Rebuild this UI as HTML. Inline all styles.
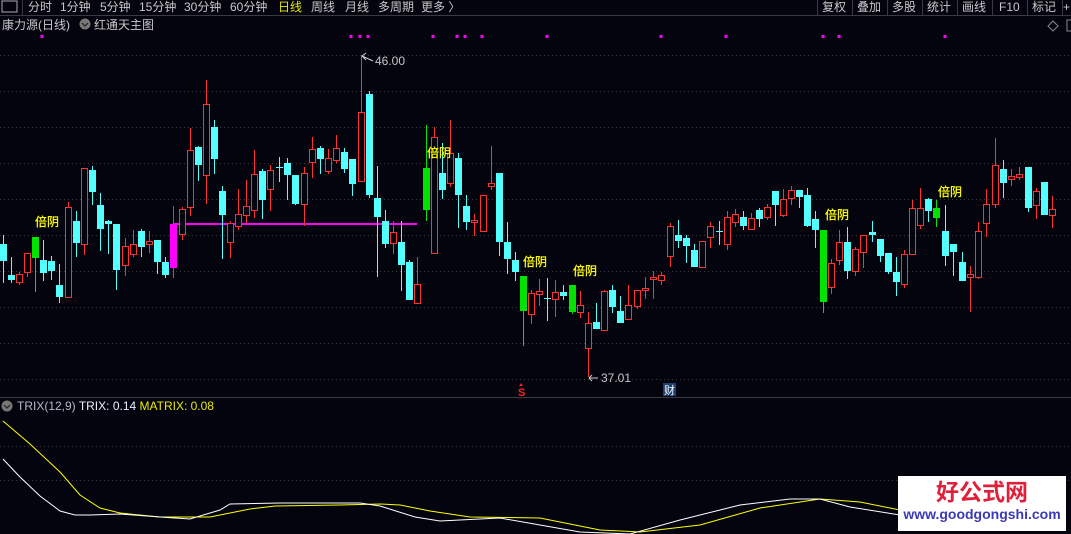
<!DOCTYPE html>
<html><head><meta charset="utf-8">
<style>
html,body{margin:0;padding:0;background:#04040e;width:1071px;height:534px;overflow:hidden;font-family:"Liberation Sans","Noto Sans CJK SC",sans-serif;}
svg{display:block}
text{font-family:"Liberation Sans","Noto Sans CJK SC",sans-serif;}
</style></head><body>
<svg id="s" width="1071" height="534" viewBox="0 0 1071 534" xmlns="http://www.w3.org/2000/svg">
<rect width="1071" height="534" fill="#04040e"/>
<line x1="0" y1="15.5" x2="1071" y2="15.5" stroke="#3a3a40"/>
<line x1="22.5" y1="0" x2="22.5" y2="15" stroke="#3a3a40"/>
<rect x="2" y="1" width="15" height="11" fill="none" stroke="#aaa" stroke-width="1"/>
<g font-size="12" fill="#c8c8c8">
<text x="28" y="11">分时</text><text x="60" y="11">1分钟</text><text x="100" y="11">5分钟</text>
<text x="139" y="11">15分钟</text><text x="184" y="11">30分钟</text><text x="230" y="11">60分钟</text>
<text x="278" y="11" fill="#e8e800">日线</text><text x="311" y="11">周线</text><text x="345" y="11">月线</text>
<text x="378" y="11">多周期</text><text x="421" y="11">更多 〉</text>
<text x="822" y="11">复权</text><text x="857" y="11">叠加</text><text x="892" y="11">多股</text>
<text x="927" y="11">统计</text><text x="962" y="11">画线</text><text x="999" y="11">F10</text>
<text x="1032" y="11">标记</text><text x="1063" y="11">+</text>
</g>
<g stroke="#3a3a40"><line x1="817.5" y1="0" x2="817.5" y2="15"/><line x1="852.5" y1="0" x2="852.5" y2="15"/><line x1="887.5" y1="0" x2="887.5" y2="15"/><line x1="922.5" y1="0" x2="922.5" y2="15"/><line x1="957.5" y1="0" x2="957.5" y2="15"/><line x1="992.5" y1="0" x2="992.5" y2="15"/><line x1="1027.5" y1="0" x2="1027.5" y2="15"/><line x1="1062.5" y1="0" x2="1062.5" y2="15"/></g>
<text x="2" y="29" font-size="12" fill="#c8c8c8">康力源(日线)</text>
<circle cx="85" cy="24" r="5.5" fill="#777"/><path d="M82 23 L85 26 L88 23" stroke="#222" fill="none" stroke-width="1.2"/>
<text x="94" y="29" font-size="12" fill="#c8c8c8">红通天主图</text>
<path d="M1053 21 L1058 26 L1053 31 L1048 26 Z" fill="none" stroke="#888"/>
<rect x="1067" y="20" width="6" height="11" fill="none" stroke="#888"/>
<g id="grid"></g>
<g id="dots"></g>
<line x1="173" y1="224" x2="417" y2="224" stroke="#ff00ff" stroke-width="2"/>
<g id="c"></g>
<g font-size="12" fill="#ffff00" stroke="#ffff00" stroke-width="0.3">
<text x="35" y="226">倍阴</text><text x="427" y="157">倍阴</text><text x="523" y="266">倍阴</text>
<text x="573" y="275">倍阴</text><text x="825" y="219">倍阴</text><text x="938" y="196">倍阴</text>
</g>
<path d="M362 56 L366 53 M362 56 L366 60 M362 56 L373 61" stroke="#ccc" fill="none"/>
<text x="375" y="65" font-size="12" fill="#c8c8c8">46.00</text>
<path d="M589 378 L598 378 M589 378 L592 375 M589 378 L592 381" stroke="#ccc" fill="none"/>
<text x="601" y="382" font-size="12" fill="#c8c8c8">37.01</text>
<text x="518" y="396" font-size="11" font-weight="bold" fill="#ff2020">S</text>
<path d="M519 386 L521 383 L523 386 Z" fill="#ff2020"/>
<rect x="663" y="383" width="13" height="13" fill="#1a4070"/>
<text x="664" y="394" font-size="11" fill="#fff">财</text>
<line x1="0" y1="397.5" x2="1071" y2="397.5" stroke="#3a3a40"/>
<circle cx="7" cy="406" r="5.5" fill="#777"/><path d="M4 405 L7 408 L10 405" stroke="#222" fill="none" stroke-width="1.2"/>
<text x="17" y="410" font-size="12" fill="#aab"><tspan fill="#b8b8c8">TRIX(12,9)</tspan> <tspan fill="#e8f0ff">TRIX: 0.14</tspan> <tspan fill="#e8e800">MATRIX: 0.08</tspan></text>
<polyline fill="none" stroke="#ffff00" stroke-width="1" points="3,421 30,444 60,472 80,495 100,508 120,513 160,517 210,517 250,509 275,506 340,505 380,504 400,505 430,511 470,517 540,518 600,530 640,532 700,525 760,508 820,499 860,502 900,510"/>
<polyline fill="none" stroke="#ffffff" stroke-width="1" points="3,459 20,477 40,496 60,511 75,515 90,515 120,514 160,517 190,519 220,510 230,504 280,503 340,503 360,503 380,506 415,517 440,521 500,518 540,525 580,532 630,534 680,520 740,505 790,499 820,499 850,507 900,515"/>
<rect x="898" y="476" width="168" height="55" fill="#fff"/>
<text x="982" y="500" font-size="23" font-weight="bold" fill="#e0203a" text-anchor="middle">好公式网</text>
<text x="982" y="519" font-size="14" font-weight="bold" fill="#3a3ab4" text-anchor="middle">www.goodgongshi.com</text>
</svg>
<script>
var ns="http://www.w3.org/2000/svg";
function el(p,t,a){var e=document.createElementNS(ns,t);for(var k in a)e.setAttribute(k,a[k]);p.appendChild(e);return e;}
var g=document.getElementById("grid");
[55,91,127,163,199,235,271,307,343,379,446,480].forEach(function(y){el(g,"line",{x1:0,x2:1071,y1:y+.5,y2:y+.5,stroke:"#3a3a3a","stroke-dasharray":"1 3"});});
var d=document.getElementById("dots");
[42,351,360,368,433,457,465,482,547,661,726,823,839,945].forEach(function(x){el(d,"rect",{x:x-1.5,y:35,width:3,height:3,fill:"#ff00ff"});});
var C=[
[3,244,261,235,283,"c"],[11,275,280,257,283,"c"],[19,274,282,272,285,"r"],[27,253,272,253,277,"r"],[35,237,258,237,292,"g"],
[43,260,273,240,281,"c"],[51,261,271,256,280,"c"],[59,285,297,264,303,"c"],[68,207,297,202,298,"r"],[76,221,243,211,257,"c"],
[84,168,244,168,255,"r"],[92,170,192,166,205,"c"],[100,205,229,193,251,"c"],[108,221,224,220,254,"c"],[116,224,270,224,290,"c"],
[125,246,265,238,276,"r"],[133,244,254,230,257,"r"],[141,231,247,229,257,"c"],[149,241,244,231,253,"r"],[157,240,262,240,274,"c"],
[165,262,275,257,278,"c"],[173,224,268,206,278,"m"],[182,209,234,207,240,"r"],[190,150,207,128,216,"r"],[198,147,165,146,181,"c"],
[206,104,175,80,204,"r"],[214,127,159,120,174,"c"],[222,191,215,186,259,"c"],[230,223,242,221,258,"r"],[238,214,226,189,230,"r"],
[246,206,215,180,223,"r"],[254,174,210,150,218,"r"],[262,171,200,169,219,"c"],[270,170,189,165,211,"r"],[279,167,168,157,182,"c"],
[287,163,175,158,200,"c"],[295,175,204,175,205,"c"],[304,173,204,167,226,"r"],[312,149,162,137,178,"r"],[320,148,159,146,174,"c"],
[328,158,171,149,174,"r"],[336,148,160,135,163,"r"],[344,152,169,148,173,"c"],[352,159,184,159,196,"c"],[361,112,181,55,181,"r"],
[369,94,195,91,198,"c"],[377,198,217,166,277,"c"],[385,221,244,210,248,"c"],[393,232,243,221,254,"r"],[401,242,265,221,291,"c"],
[409,262,300,260,300,"c"],[417,284,303,257,303,"r"],[426,168,210,125,221,"g"],[434,137,253,127,253,"r"],[442,173,190,143,199,"c"],
[450,153,183,120,187,"r"],[458,158,195,153,228,"c"],[466,206,222,195,230,"c"],[474,220,222,214,236,"r"],[483,195,231,195,231,"r"],
[491,183,186,146,190,"r"],[499,173,242,173,256,"c"],[507,242,259,222,274,"c"],[515,260,272,252,281,"c"],[523,276,311,276,346,"g"],
[531,293,314,290,324,"r"],[539,291,294,279,306,"r"],[547,298,299,278,321,"c"],[555,292,299,280,317,"r"],[563,292,296,285,300,"c"],
[572,285,312,285,314,"g"],[580,305,312,291,318,"r"],[588,323,348,312,377,"r"],[596,322,329,303,329,"c"],[604,291,330,290,330,"r"],
[612,290,307,285,313,"c"],[620,311,323,296,323,"c"],[628,305,319,285,319,"r"],[637,290,306,290,309,"r"],[645,288,290,277,299,"r"],
[653,277,279,271,299,"r"],[661,275,280,272,285,"r"],[670,226,256,223,267,"r"],[678,235,241,220,248,"c"],[686,238,246,235,263,"c"],
[694,250,267,244,267,"c"],[702,241,267,241,267,"r"],[710,226,237,222,248,"r"],[719,231,232,221,245,"c"],[727,217,244,211,250,"r"],
[735,214,222,209,227,"r"],[743,217,226,211,230,"c"],[751,218,229,213,230,"r"],[759,210,219,208,227,"c"],[767,207,217,204,220,"r"],
[775,191,205,191,226,"c"],[783,199,215,189,217,"r"],[791,190,198,186,205,"r"],[799,190,197,190,208,"c"],[807,195,226,188,227,"c"],
[815,219,230,211,248,"c"],[823,230,302,230,313,"g"],[831,263,287,259,294,"r"],[839,242,260,230,265,"r"],[847,242,271,227,279,"c"],
[855,249,271,247,276,"r"],[863,235,252,235,268,"r"],[872,232,235,221,242,"c"],[880,239,256,239,262,"c"],[888,253,272,253,274,"c"],
[896,272,282,257,296,"c"],[904,254,284,250,288,"r"],[912,208,254,200,255,"r"],[920,208,225,188,229,"r"],[928,199,211,198,222,"c"],
[936,208,218,200,227,"g"],[945,231,256,205,266,"c"],[953,244,252,244,276,"c"],[962,262,281,252,281,"c"],[970,274,277,266,312,"r"],
[978,231,277,222,279,"r"],[986,204,223,189,237,"r"],[995,165,204,138,208,"r"],[1003,169,183,160,198,"c"],[1011,176,179,169,186,"r"],
[1019,174,177,167,180,"r"],[1028,167,208,167,212,"c"],[1036,191,205,188,219,"r"],[1044,182,215,182,215,"c"],[1052,209,215,196,228,"r"]
];
var col={r:"#ff3232",c:"#54ffff",g:"#00e400",m:"#ff00ff"};
var cg=document.getElementById("c");
C.forEach(function(k){var x=k[0],t=k[1],b=k[2],h=k[3],l=k[4],c=col[k[5]];
 el(cg,"line",{x1:x+.5,x2:x+.5,y1:h,y2:l,stroke:c});
 if(k[5]=="r"){el(cg,"rect",{x:x-2.5,y:t+.5,width:6,height:Math.max(b-t,1),fill:"#04040e",stroke:c});}
 else{el(cg,"rect",{x:x-3,y:t,width:7,height:Math.max(b-t,1),fill:c});}
});
</script>
</body></html>
